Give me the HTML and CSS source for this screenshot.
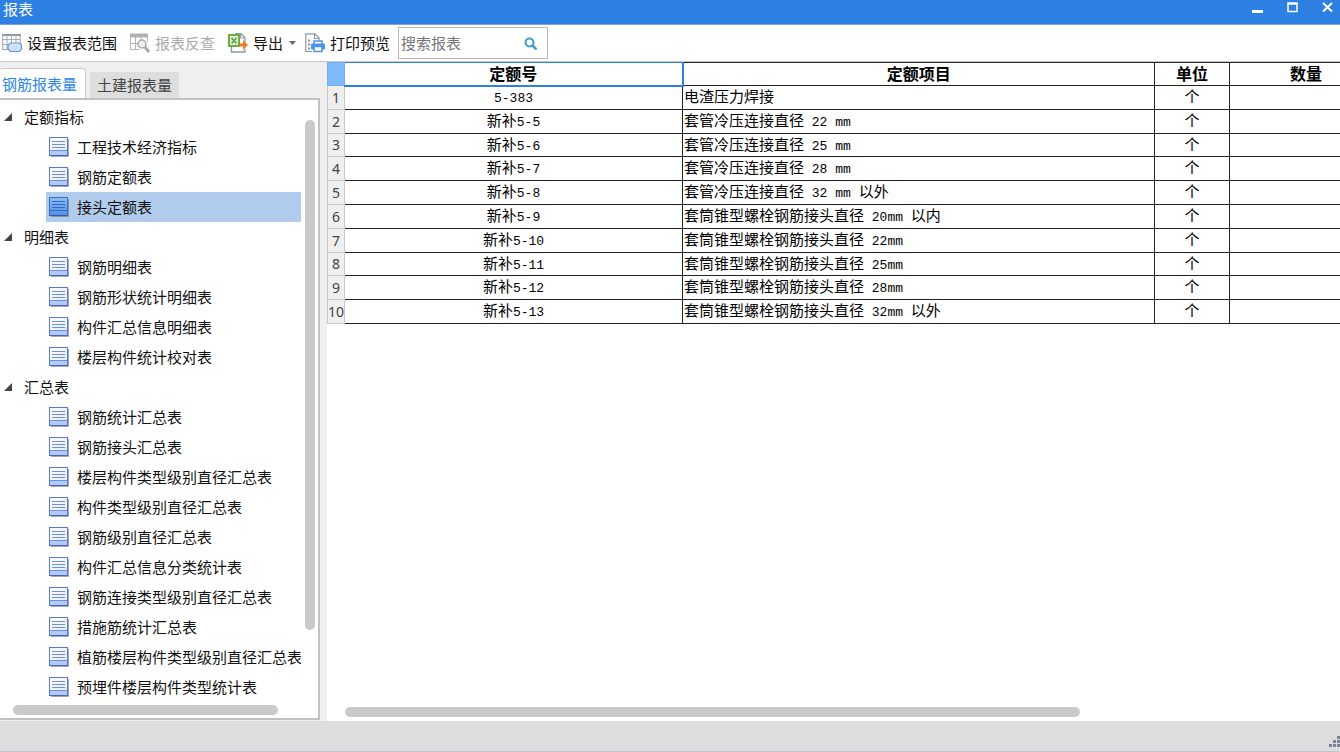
FILE: index.html
```
<!DOCTYPE html>
<html lang="zh-CN">
<head>
<meta charset="utf-8">
<title>报表</title>
<link rel="stylesheet" href="styles.css">
</head>
<body>
<svg class="defs" aria-hidden="true">
  <linearGradient id="page" x1="0" y1="0" x2="1" y2="1"><stop offset="0" stop-color="#fff"/><stop offset="1" stop-color="#dfe8fb"/></linearGradient>
  <linearGradient id="page-on" x1="0" y1="0" x2="0" y2="1"><stop offset="0" stop-color="#8dbcf0"/><stop offset="1" stop-color="#5590df"/></linearGradient>
  <symbol id="doc" viewBox="0 0 21 20">
    <path d="M2 19.500h17.500V2" fill="none" stroke="#a6a6ae"/>
    <rect x=".5" y=".5" width="18" height="18" fill="url(#page)" stroke="#5a78cf"/>
    <rect x="1" y="14" width="17" height="4" fill="#b3caff"/>
    <path d="M1 13.500h17" stroke="#6f90e0"/>
    <path d="M3 4.500h13M3 7.500h13M3 10.500h13" stroke="#6c90de"/>
    <path d="M0 18.500h19" stroke="#4a64bd"/>
  </symbol>
  <symbol id="doc-on" viewBox="0 0 21 20">
    <path d="M2 19.500h17.500V2" fill="none" stroke="#8492ab"/>
    <rect x=".5" y=".5" width="18" height="18" fill="url(#page-on)" stroke="#3471c6"/>
    <path d="M1 13.500h17M3 4.500h13M3 7.500h13M3 10.500h13" stroke="#2d6bc8"/>
    <path d="M0 18.500h19" stroke="#2d5fb0"/>
  </symbol>
</svg>

<header class="titlebar">
  <h1 class="title">报表</h1>
  <div class="window-buttons">
    <button type="button" aria-label="最小化"><svg width="11" height="11"><path d="M0 9.500h11" stroke="#fff" stroke-width="3"/></svg></button>
    <button type="button" aria-label="最大化"><svg width="11" height="11"><path d="M1 2h9M1 1v8.500h9V1z" fill="none" stroke="#fff" stroke-width="1.500"/></svg></button>
    <button type="button" aria-label="关闭"><svg width="11" height="11"><path d="M1 1l9 8.500M10 1L1 9.500" stroke="#fff" stroke-width="2"/></svg></button>
  </div>
</header>

<div class="toolbar">
  <button type="button" class="tool">
    <svg width="20" height="20" viewBox="0 0 20 20"><rect x=".7" y="1.500" width="17.500" height="15" fill="#fff" stroke="#9ba5ac"/><path d="M0 2h19" stroke="#8d989f" stroke-width="2"/><path d="M1 6.500h17M1 11.500h17M5 2v15M9.500 2v15M14 2v15" stroke="#a5afb5"/><path d="M8.500 10h9l2 2v4l-2 2.500h-9l-2.500-2.500v-4z" fill="#cfe1fb" stroke="#5b94e6" stroke-width="1.200"/></svg>
    设置报表范围
  </button>
  <button type="button" class="tool" disabled>
    <svg width="20" height="20" viewBox="0 0 20 20"><path d="M0 2.500h18" stroke="#b0b0b0" stroke-width="4"/><path d="M.5 1v15.500h9M5.500 4v12M11 4v3M17.500 3v6M1 10.500h7" fill="none" stroke="#b4b4b4"/><circle cx="12" cy="11" r="4" fill="#eee" stroke="#aaa" stroke-width="1.500"/><path d="M15 14l4 5" stroke="#aaa" stroke-width="3"/></svg>
    报表反查
  </button>
  <button type="button" class="tool tool-menu">
    <svg width="20" height="20" viewBox="0 0 20 20"><path d="M3.500 12v7h13.500v-3M7 .7h6l4 4V9" fill="none" stroke="#8c989f" stroke-width="1.300"/><path d="M12.500 1v4H17" fill="none" stroke="#8c989f"/><rect x="1" y="2" width="10" height="11" fill="#fff" stroke="#5ba52e" stroke-width="1.800"/><path d="M3.500 5l5 5.500M8.500 5l-5 5.500" stroke="#58a32d" stroke-width="1.800"/><path d="M3 4.500h6v6.500H3z" fill="none" stroke="#a5d087" stroke-width=".7"/><path d="M12 10.500h3V7l5 5-5 5v-3.500h-3z" fill="#f37a25"/></svg>
    导出
    <svg class="caret" width="7" height="4"><path d="M0 0h7L3.500 4z" fill="#666"/></svg>
  </button>
  <button type="button" class="tool tool-last">
    <svg width="20" height="20" viewBox="0 0 20 20"><path d="M7 18.500H.8V.8H10l4 4V8M9.500 1v4.500H14" fill="none" stroke="#8c989f" stroke-width="1.200"/><path d="M3 7.500h2M3 11.500h2M3 15.500h2" stroke="#8996a0" stroke-width="2"/><path d="M9 11V8h8v3" fill="#fff" stroke="#4a94e9" stroke-width="1.500"/><rect x="6" y="10.500" width="14" height="6" rx="1" fill="#4a94e9"/><rect x="9" y="13.500" width="8" height="5" fill="#fff" stroke="#4a94e9" stroke-width="1.500"/></svg>
    打印预览
  </button>
  <label class="search">
    <input type="text" placeholder="搜索报表" aria-label="搜索报表">
    <svg width="13" height="13"><circle cx="5.500" cy="5.500" r="4" fill="none" stroke="#429bd0" stroke-width="2"/><path d="M8.500 8.500l4 4" stroke="#429bd0" stroke-width="2.500"/></svg>
  </label>
</div>

<main class="workspace">
  <aside class="sidebar">
    <div class="tabs" role="tablist">
      <button type="button" class="tab tab-active" role="tab" aria-selected="true">钢筋报表量</button>
      <button type="button" class="tab" role="tab" aria-selected="false">土建报表量</button>
    </div>
    <div class="panel">
      <div class="tree">
        <section>
          <h2 class="group"><svg width="8" height="8"><path d="M0 8h8V0z" fill="#444"/></svg>定额指标</h2>
          <ul>
            <li class="item"><svg class="doc"><use href="#doc"/></svg>工程技术经济指标</li>
            <li class="item"><svg class="doc"><use href="#doc"/></svg>钢筋定额表</li>
            <li class="item item-selected"><svg class="doc"><use href="#doc-on"/></svg>接头定额表</li>
          </ul>
        </section>
        <section>
          <h2 class="group"><svg width="8" height="8"><path d="M0 8h8V0z" fill="#444"/></svg>明细表</h2>
          <ul>
            <li class="item"><svg class="doc"><use href="#doc"/></svg>钢筋明细表</li>
            <li class="item"><svg class="doc"><use href="#doc"/></svg>钢筋形状统计明细表</li>
            <li class="item"><svg class="doc"><use href="#doc"/></svg>构件汇总信息明细表</li>
            <li class="item"><svg class="doc"><use href="#doc"/></svg>楼层构件统计校对表</li>
          </ul>
        </section>
        <section>
          <h2 class="group"><svg width="8" height="8"><path d="M0 8h8V0z" fill="#444"/></svg>汇总表</h2>
          <ul>
            <li class="item"><svg class="doc"><use href="#doc"/></svg>钢筋统计汇总表</li>
            <li class="item"><svg class="doc"><use href="#doc"/></svg>钢筋接头汇总表</li>
            <li class="item"><svg class="doc"><use href="#doc"/></svg>楼层构件类型级别直径汇总表</li>
            <li class="item"><svg class="doc"><use href="#doc"/></svg>构件类型级别直径汇总表</li>
            <li class="item"><svg class="doc"><use href="#doc"/></svg>钢筋级别直径汇总表</li>
            <li class="item"><svg class="doc"><use href="#doc"/></svg>构件汇总信息分类统计表</li>
            <li class="item"><svg class="doc"><use href="#doc"/></svg>钢筋连接类型级别直径汇总表</li>
            <li class="item"><svg class="doc"><use href="#doc"/></svg>措施筋统计汇总表</li>
            <li class="item"><svg class="doc"><use href="#doc"/></svg>植筋楼层构件类型级别直径汇总表</li>
            <li class="item"><svg class="doc"><use href="#doc"/></svg>预埋件楼层构件类型统计表</li>
          </ul>
        </section>
      </div>
      <div class="track-y"><div class="thumb"></div></div>
      <div class="track-x"><div class="thumb"></div></div>
    </div>
  </aside>

  <section class="sheet">
    <div class="sheet-view">
      <table class="grid">
        <colgroup><col class="col-row"><col class="col-code"><col class="col-name"><col class="col-unit"><col class="col-qty"></colgroup>
        <thead>
          <tr><td class="corner"></td><th class="cursor" scope="col">定额号</th><th scope="col">定额项目</th><th scope="col">单位</th><th scope="col">数量</th></tr>
        </thead>
        <tbody>
          <tr><th scope="row">1</th><td><span class="half">5-383</span></td><td class="name">电渣压力焊接</td><td>个</td><td></td></tr>
          <tr><th scope="row">2</th><td>新补<span class="half">5-5</span></td><td class="name">套管冷压连接直径<span class="half"> 22 mm</span></td><td>个</td><td></td></tr>
          <tr><th scope="row">3</th><td>新补<span class="half">5-6</span></td><td class="name">套管冷压连接直径<span class="half"> 25 mm</span></td><td>个</td><td></td></tr>
          <tr><th scope="row">4</th><td>新补<span class="half">5-7</span></td><td class="name">套管冷压连接直径<span class="half"> 28 mm</span></td><td>个</td><td></td></tr>
          <tr><th scope="row">5</th><td>新补<span class="half">5-8</span></td><td class="name">套管冷压连接直径<span class="half"> 32 mm </span>以外</td><td>个</td><td></td></tr>
          <tr><th scope="row">6</th><td>新补<span class="half">5-9</span></td><td class="name">套筒锥型螺栓钢筋接头直径<span class="half"> 20mm </span>以内</td><td>个</td><td></td></tr>
          <tr><th scope="row">7</th><td>新补<span class="half">5-10</span></td><td class="name">套筒锥型螺栓钢筋接头直径<span class="half"> 22mm</span></td><td>个</td><td></td></tr>
          <tr><th scope="row">8</th><td>新补<span class="half">5-11</span></td><td class="name">套筒锥型螺栓钢筋接头直径<span class="half"> 25mm</span></td><td>个</td><td></td></tr>
          <tr><th scope="row">9</th><td>新补<span class="half">5-12</span></td><td class="name">套筒锥型螺栓钢筋接头直径<span class="half"> 28mm</span></td><td>个</td><td></td></tr>
          <tr><th scope="row">10</th><td>新补<span class="half">5-13</span></td><td class="name">套筒锥型螺栓钢筋接头直径<span class="half"> 32mm </span>以外</td><td>个</td><td></td></tr>
        </tbody>
      </table>
    </div>
    <div class="sheet-track"><div class="thumb"></div></div>
  </section>
</main>

<footer class="statusbar">
  <svg width="12" height="12"><path d="M9 1h3v3H9zM5 5h3v3H5zM9 5h3v3H9zM1 9h3v3H1zM5 9h3v3H5zM9 9h3v3H9z" fill="#7b8490"/></svg>
</footer>
</body>
</html>
```
FILE: styles.css
```
* { box-sizing: border-box; }

body {
  margin: 0;
  height: 100vh;
  display: flex;
  flex-direction: column;
  overflow: hidden;
  background: #fff;
  color: #111;
  font: 15px/20px "Noto Sans CJK SC", sans-serif;
}

button {
  border: 0;
  padding: 0;
  background: none;
  color: inherit;
  font: inherit;
}

ul { margin: 0; padding: 0; list-style: none; }
svg { flex: none; display: block; }
.defs { position: absolute; width: 0; height: 0; }

.titlebar {
  flex: none;
  display: flex;
  justify-content: space-between;
  height: 25px;
  padding: 0 7px 0 3px;
  border-bottom: 1px solid #6fa8e8;
  background: #2d80e1;
  color: #fff;
}
.title { margin: 0; font-size: 15px; font-weight: 400; line-height: 18px; }
.window-buttons { display: flex; align-items: flex-start; gap: 24px; padding-top: 2px; }

.toolbar {
  flex: none;
  display: flex;
  align-items: center;
  height: 37px;
  padding-left: 2px;
  border-bottom: 1px solid #c8caca;
}
.tool { display: flex; align-items: center; gap: 5px; margin-right: 13px; white-space: nowrap; }
.tool:disabled { color: #aaa; }
.tool-menu { margin-right: 9px; }
.tool-menu .caret { margin-left: 1px; }
.tool-last { margin-right: 8px; }
.search {
  display: flex;
  align-items: center;
  width: 150px;
  height: 32px;
  padding: 0 10px 0 2px;
  border: 1px solid #b9b9b9;
}
.search input {
  flex: 1;
  min-width: 0;
  padding: 0;
  border: 0;
  outline: 0;
  background: none;
  color: #333;
  font: inherit;
}
.search input::placeholder { color: #777; opacity: 1; }

.workspace { flex: 1; min-height: 0; display: flex; }

.sidebar {
  flex: none;
  width: 327px;
  display: flex;
  flex-direction: column;
  padding: 6px 7px 1px 0;
  background: #efefef;
}
.tabs { flex: none; display: flex; align-items: flex-end; gap: 4px; height: 30px; }
.tab { height: 26px; padding: 0 7px; border-radius: 3px 3px 0 0; background: #dedede; color: #444; }
.tab-active {
  height: 30px;
  padding: 0 8px 0 2px;
  border: 1px solid #c9cbcd;
  border-width: 1px 1px 0 0;
  background: #fff;
  color: #2d86ea;
}
.panel {
  flex: 1;
  min-height: 0;
  display: grid;
  grid-template: minmax(0, 1fr) 18px / minmax(0, 1fr) 17px;
  border: 2px solid #bfc1c4;
  border-left: 0;
  background: #fff;
}
.tree { overflow: hidden; padding-top: 2px; }
.group { display: flex; align-items: center; gap: 12px; height: 30px; margin: 0; padding-left: 4px; font-size: 15px; font-weight: 400; }
.item {
  display: flex;
  align-items: center;
  gap: 7px;
  height: 30px;
  margin-left: 46px;
  padding-left: 3px;
  white-space: nowrap;
}
.item-selected { background: #b1cbec; }
.doc { width: 21px; height: 20px; }
.thumb { border-radius: 5px; background: #cacaca; }
.track-y { padding: 20px 3px 0 4px; }
.track-y .thumb { height: 88%; }
.track-x { padding: 5px 0 0 13px; }
.track-x .thumb { width: 92%; height: 10px; }

.sheet { flex: 1; min-width: 0; display: flex; flex-direction: column; }
.sheet-view { flex: 1; min-height: 0; overflow: hidden; }
.grid { width: 1055px; table-layout: fixed; border-collapse: collapse; line-height: 18px; color: #000; }
.col-row { width: 17px; }
.col-code { width: 338px; }
.col-name { width: 472px; }
.col-unit { width: 75px; }
.col-qty { width: 153px; }
.grid tr { height: 24px; }
.grid thead tr,
.grid tbody tr:nth-child(5n + 3) { height: 23px; }
.grid th, .grid td { padding: 0; border: 1px solid #222; text-align: center; white-space: pre; }
.grid tbody td { padding-bottom: 3px; }
.grid td.name { padding-left: 1px; text-align: left; }
.grid thead th { padding-bottom: 2px; font-size: 16px; font-weight: 700; }
.grid tbody th {
  border-color: #c9c9c9;
  background: #efefef;
  color: #444;
  font: 14px/18px "Noto Sans", sans-serif;
}
.grid td.corner { border-color: #74b0f0; background: #80bafa; }
.grid th.cursor { border: 2px solid #2d80e1; border-top-width: 1px; border-left-width: 1px; }
.half { font-family: "Liberation Mono", monospace; font-size: 13px; line-height: 1; }
.sheet-track { flex: none; padding: 0 260px 4px 18px; }
.sheet-track .thumb { height: 10px; }

.statusbar {
  flex: none;
  display: flex;
  justify-content: flex-end;
  align-items: flex-end;
  height: 31px;
  padding-bottom: 4px;
  border-bottom: 1px solid #c0c6d2;
  background: #dddddf;
}
```
